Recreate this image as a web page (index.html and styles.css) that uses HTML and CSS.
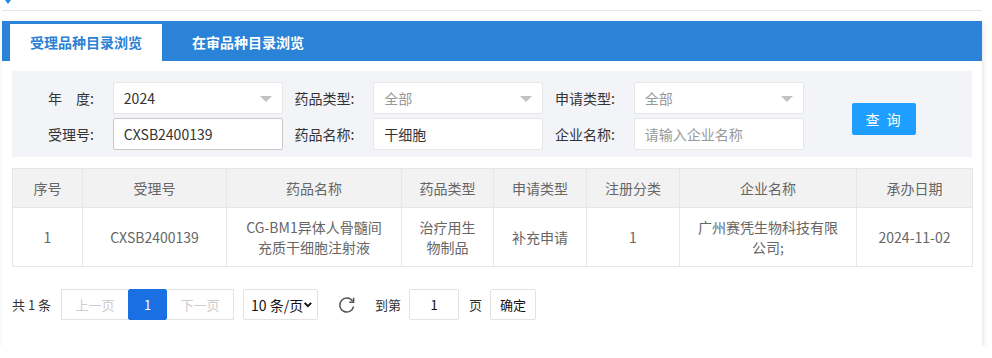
FILE: index.html
```html
<!DOCTYPE html>
<html lang="zh-CN">
<head>
<meta charset="utf-8">
<title>受理品种目录浏览</title>
<link rel="stylesheet" href="styles.css">
</head>
<body>
<div class="topbar"><span class="caret"></span></div>
<div class="card">
  <div class="tabs">
    <div class="tab active">受理品种目录浏览</div>
    <div class="tab">在审品种目录浏览</div>
  </div>
  <div class="body">
    <div class="search">
      <div class="fields">
        <div class="field">
          <label class="lbl">年　度:</label>
          <div class="ctrl select"><span class="val">2024</span><span class="tri"></span></div>
        </div>
        <div class="field">
          <label class="lbl">药品类型:</label>
          <div class="ctrl select"><span class="val ph">全部</span><span class="tri"></span></div>
        </div>
        <div class="field">
          <label class="lbl">申请类型:</label>
          <div class="ctrl select"><span class="val ph">全部</span><span class="tri"></span></div>
        </div>
        <div class="field">
          <label class="lbl">受理号:</label>
          <div class="ctrl focus"><span class="val">CXSB2400139</span></div>
        </div>
        <div class="field">
          <label class="lbl">药品名称:</label>
          <div class="ctrl"><span class="val">干细胞</span></div>
        </div>
        <div class="field">
          <label class="lbl">企业名称:</label>
          <div class="ctrl"><span class="val ph">请输入企业名称</span></div>
        </div>
      </div>
      <button class="btn-search">查 询</button>
    </div>

    <table class="grid">
      <colgroup>
        <col class="c1"><col class="c2"><col class="c3"><col class="c4"><col class="c5"><col class="c6"><col class="c7"><col class="c8">
      </colgroup>
      <thead>
        <tr><th>序号</th><th>受理号</th><th>药品名称</th><th>药品类型</th><th>申请类型</th><th>注册分类</th><th>企业名称</th><th>承办日期</th></tr>
      </thead>
      <tbody>
        <tr><td>1</td><td>CXSB2400139</td><td>CG-BM1异体人骨髓间充质干细胞注射液</td><td>治疗用生物制品</td><td>补充申请</td><td>1</td><td>广州赛凭生物科技有限公司;</td><td>2024-11-02</td></tr>
      </tbody>
    </table>

    <div class="pager">
      <span class="count">共 1 条</span>
      <div class="pages">
        <span class="pg disabled">上一页</span><span class="pg current">1</span><span class="pg disabled">下一页</span>
      </div>
      <div class="limit"><span>10 条/页</span><svg width="12" height="9" viewBox="0 0 12 9"><path d="M2 2.5 L6 6.5 L10 2.5" fill="none" stroke="#111" stroke-width="2.4"/></svg></div>
      <svg class="refresh" width="18" height="18" viewBox="0 0 18 18"><path d="M14.6 5.2 A7 7 0 1 0 15.6 10.5" fill="none" stroke="#555" stroke-width="1.5"/><path d="M15.6 1.8 L15.6 6.2 L11.2 6.2" fill="none" stroke="#555" stroke-width="1.5"/></svg>
      <span class="goto">到第</span>
      <span class="pinput">1</span>
      <span class="goto">页</span>
      <span class="ok">确定</span>
    </div>
  </div>
</div>
</body>
</html>
```
FILE: styles.css
```css
* { box-sizing: border-box; }
body {
  margin: 0;
  background: #fff;
  font-family: "Noto Sans CJK SC", "Noto Sans", sans-serif;
  font-size: 14px;
  color: #333;
}
.topbar {
  height: 11px;
  margin: 0 10px 0 2px;
  border-bottom: 1px solid #e6e6e6;
}
.caret {
  display: block;
  width: 0;
  height: 0;
  margin-left: 3px;
  border-left: 3px solid transparent;
  border-right: 3px solid transparent;
  border-top: 4px solid #1e88e5;
}
.card {
  width: 980px;
  margin: 10px 0 0 2px;
  background: #fff;
  box-shadow: 1px 2px 5px rgba(0,0,0,0.12);
  padding-bottom: 26px;
}
.tabs {
  height: 40px;
  background: #2a83d6;
  display: flex;
  align-items: flex-end;
  padding-left: 8px;
}
.tab {
  height: 37px;
  line-height: 36px;
  font-weight: bold;
  color: #fff;
  white-space: nowrap;
  padding: 0 20px;
}
.tab.active {
  background: #fff;
  color: #2a80d5;
  width: 152px;
  padding: 0;
  text-align: center;
}
.tab + .tab { margin-left: 10px; }
.body { padding: 10px 10px 0 10px; }
.search {
  background: #f3f4f8;
  padding: 11px 0 7px 10px;
  display: flex;
  align-items: center;
}
.fields {
  display: grid;
  grid-template-columns: repeat(3, 260.5px);
  row-gap: 4px;
  width: 782px;
}
.field { display: flex; align-items: center; }
.lbl {
  width: 72px;
  margin-right: 19px;
  text-align: right;
  color: #333;
  white-space: nowrap;
}
.ctrl {
  width: 170px;
  height: 32px;
  background: #fff;
  border: 1px solid #e6e6e6;
  border-radius: 2px;
  display: flex;
  align-items: center;
  padding-left: 10px;
  position: relative;
  font-size: 14px;
  color: #333;
}
.ctrl.focus { border-color: #c9c9c9; }
.ph { color: #999; }
.tri {
  position: absolute;
  right: 10px;
  top: 13px;
  width: 0; height: 0;
  border-left: 6px solid transparent;
  border-right: 6px solid transparent;
  border-top: 6px solid #c2c2c2;
}
.btn-search {
  margin-left: 48px;
  margin-top: 6px;
  width: 64px;
  height: 32px;
  border: 0;
  border-radius: 2px;
  background: #1e9fff;
  color: #fff;
  font-family: inherit;
  font-size: 14px;
  letter-spacing: 2px;
}
.grid {
  margin-top: 11px;
  width: 960px;
  border-collapse: collapse;
  table-layout: fixed;
  color: #666;
  font-size: 14px;
}
.c1 { width: 70px; } .c2 { width: 144px; } .c3 { width: 175px; } .c4 { width: 92px; }
.c5 { width: 93px; } .c6 { width: 93px; } .c7 { width: 177px; } .c8 { width: 116px; }
.grid th, .grid td {
  border: 1px solid #e6e6e6;
  padding: 9px 15px;
  line-height: 20px;
  text-align: center;
  font-weight: normal;
}
.grid th { background: #f2f2f2; }
.pager {
  margin-top: 22px;
  display: flex;
  align-items: center;
  font-size: 13px;
  color: #333;
  white-space: nowrap;
}
.count { margin-right: 10px; }
.pages { display: flex; }
.pg {
  height: 31px;
  line-height: 29px;
  border: 1px solid #e2e2e2;
  text-align: center;
  color: #333;
}
.pg.disabled { width: 67px; color: #ccc; }
.pg.disabled:first-child { border-right: 0; }
.pg.disabled:last-child { border-left: 0; }
.pg.current {
  width: 39px;
  background: #1a6fe3;
  border-color: #1a6fe3;
  color: #fff;
  border-radius: 2px;
}
.limit {
  margin-left: 9px;
  width: 75px;
  height: 31px;
  border: 1px solid #e2e2e2;
  border-radius: 2px;
  display: flex;
  align-items: center;
  justify-content: space-between;
  padding: 0 4px 0 7px;
  font-size: 14px;
  color: #111;
  white-space: nowrap;
}
.refresh { margin-left: 20px; }
.goto { margin-left: 19px; }
.pinput {
  margin-left: 8px;
  width: 50px;
  height: 31px;
  line-height: 29px;
  border: 1px solid #e2e2e2;
  border-radius: 2px;
  text-align: center;
  color: #111;
}
.pinput + .goto { margin-left: 10px; }
.ok {
  margin-left: 8px;
  width: 46px;
  height: 31px;
  line-height: 29px;
  border: 1px solid #e2e2e2;
  border-radius: 2px;
  text-align: center;
  color: #111;
}
```
